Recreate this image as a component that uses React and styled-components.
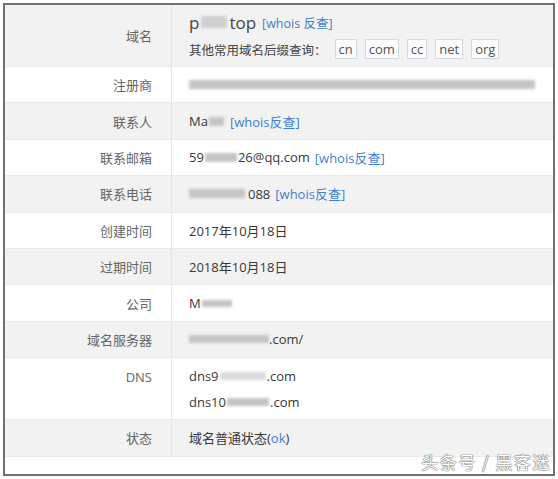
import React from "react";
import styled, { createGlobalStyle } from "styled-components";

const GlobalStyle = createGlobalStyle`
  html, body { margin: 0; padding: 0; background: #fff; }
  body { font-family: "Open Sans", "Noto Sans CJK SC", sans-serif; }
`;

const Frame = styled.div`
  position: relative;
  box-sizing: border-box;
  width: 552px;
  height: 473px;
  margin: 3px 0 0 3px;
  border: 2px solid #707070;
  background: #fff;
`;

const Table = styled.div`
  display: grid;
  grid-template-columns: 167px 1fr;
`;

const Label = styled.div`
  box-sizing: border-box;
  height: ${(p) => p.$h}px;
  background: ${(p) => (p.$gray ? "#f2f2f2" : "#fff")};
  border-right: 1px solid #e6e6e6;
  border-bottom: 1px solid #e9e9e9;
  padding: ${(p) => (p.$top ? `${p.$top}px` : "0")} 19px 0 0;
  display: flex;
  align-items: ${(p) => (p.$top ? "flex-start" : "center")};
  justify-content: flex-end;
  font-size: 13px;
  color: #666;
`;

const Value = styled.div`
  box-sizing: border-box;
  height: ${(p) => p.$h}px;
  background: ${(p) => (p.$gray ? "#f2f2f2" : "#fff")};
  border-bottom: 1px solid #e9e9e9;
  padding-left: 17px;
  display: flex;
  flex-direction: column;
  justify-content: center;
  gap: ${(p) => p.$gap || 0}px;
  font-size: 13px;
  color: #333;
`;

const Line = styled.div`
  display: flex;
  align-items: center;
  white-space: nowrap;
  height: ${(p) => p.$lh || 18}px;
  font-size: ${(p) => p.$size || 13}px;
  color: ${(p) => p.$color || "#383838"};
`;

const Link = styled.span`
  color: #3f7fcf;
  font-size: ${(p) => p.$size || 13}px;
  margin-left: ${(p) => p.$ml ?? 5}px;
`;

const Blur = styled.span`
  display: inline-block;
  width: ${(p) => p.$w}px;
  height: ${(p) => p.$bh || 9}px;
  margin: 0 ${(p) => p.$mx ?? 1}px;
  background: ${(p) => p.$bg || "#c4c4c4"};
  filter: blur(1.6px);
`;

const Tag = styled.span`
  display: inline-flex;
  align-items: center;
  height: 18px;
  padding: 0 3px;
  margin-left: 8px;
  border: 1px solid #cfd8e3;
  background: #fcfcfc;
  color: #555;
  font-size: 13px;
`;

const Filler = styled.div`
  grid-column: 1 / span 2;
  height: 16px;
`;

const Watermark = styled.div`
  position: absolute;
  right: 2px;
  bottom: 0;
  font-family: "Noto Sans CJK SC", sans-serif;
  font-size: 17px;
  letter-spacing: 1.5px;
  color: #fff;
  text-shadow: 0 0 1px #555, 0 0 1px #666, 0 0 1px #888;
`;

const Row = ({ label, gray, h = 36.4, top, gap, children }) => (
  <>
    <Label $gray={gray} $h={h} $top={top}>{label}</Label>
    <Value $gray={gray} $h={h} $gap={gap}>{children}</Value>
  </>
);

export default function App() {
  return (
    <>
      <GlobalStyle />
      <Frame>
        <Table>
          <Row label="域名" gray h={62} top={21} gap={5}>
            <Line $lh={22} $size={17} $color="#444">
              p<Blur $w={26} $bh={12} $bg="#cfcfcf" $mx={2} />top
              <Link $size={12.5} $ml={6}>[whois 反查]</Link>
            </Line>
            <Line $lh={22} $size={12.5} $color="#444">
              其他常用域名后缀查询：
              <Tag>cn</Tag>
              <Tag>com</Tag>
              <Tag>cc</Tag>
              <Tag>net</Tag>
              <Tag>org</Tag>
            </Line>
          </Row>
          <Row label="注册商">
            <Line>
              <Blur $w={346} $bh={9} $mx={0} />
            </Line>
          </Row>
          <Row label="联系人" gray>
            <Line>
              Ma<Blur $w={15} />
              <Link>[whois反查]</Link>
            </Line>
          </Row>
          <Row label="联系邮箱">
            <Line>
              59<Blur $w={32} />26@qq.com
              <Link>[whois反查]</Link>
            </Line>
          </Row>
          <Row label="联系电话" gray>
            <Line>
              <Blur $w={56} $mx={0} />
              <span style={{ marginLeft: 3 }}>088</span>
              <Link>[whois反查]</Link>
            </Line>
          </Row>
          <Row label="创建时间">
            <Line>2017年10月18日</Line>
          </Row>
          <Row label="过期时间" gray>
            <Line>2018年10月18日</Line>
          </Row>
          <Row label="公司">
            <Line>
              M<Blur $w={30} $bh={7} />
            </Line>
          </Row>
          <Row label="域名服务器" gray>
            <Line>
              <Blur $w={80} $bh={8} $mx={0} />.com/
            </Line>
          </Row>
          <Row label="DNS" h={62} top={10} gap={8}>
            <Line>
              dns9<Blur $w={46} $bh={8} $bg="#dcdcdc" />.com
            </Line>
            <Line>
              dns10<Blur $w={42} $bh={8} />.com
            </Line>
          </Row>
          <Row label="状态" gray>
            <Line>
              域名普通状态(<Link $ml={0}>ok</Link>)
            </Line>
          </Row>
          <Filler />
        </Table>
        <Watermark>头条号 / 黑客迷</Watermark>
      </Frame>
    </>
  );
}
